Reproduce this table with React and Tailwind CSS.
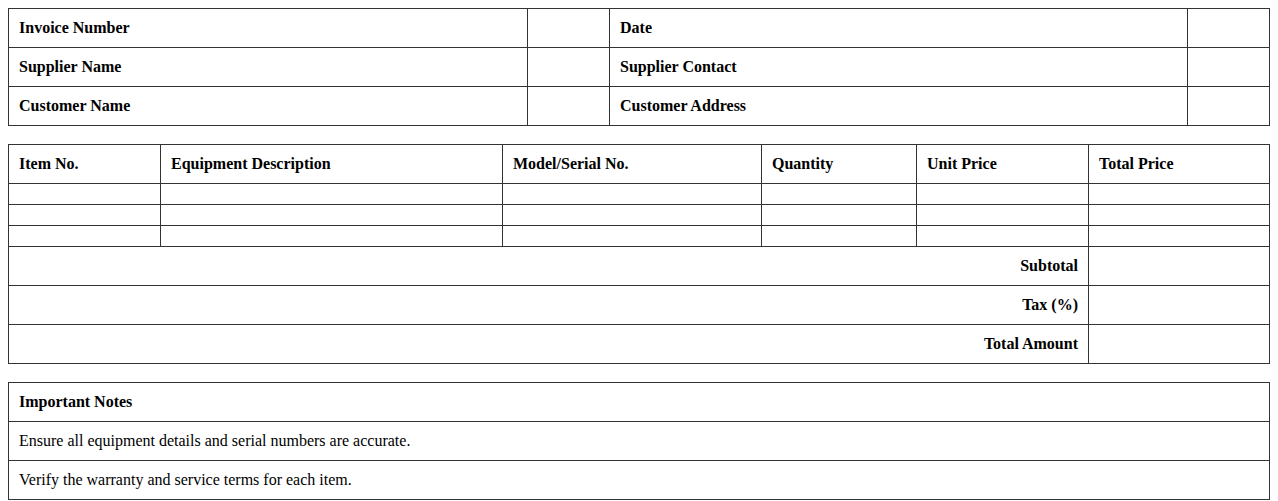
import React from 'react';

const cell = 'border border-[#333] p-[10px] align-middle';

export default function App() {
  const items = [1, 2, 3];
  return (
    <div className="min-h-screen bg-white p-2 font-['Liberation_Serif',serif] text-[16px] leading-[18px] text-black">
      <div className="flex flex-col gap-[18px]">
        <table className="w-full table-fixed border-collapse">
          <colgroup>
            <col className="w-[519px]" />
            <col className="w-[82px]" />
            <col className="w-[578px]" />
            <col />
          </colgroup>
          <tbody>
            {[
              ['Invoice Number', 'Date'],
              ['Supplier Name', 'Supplier Contact'],
              ['Customer Name', 'Customer Address'],
            ].map(([a, b]) => (
              <tr key={a}>
                <th className={`${cell} text-left font-bold`}>{a}</th>
                <td className={cell}></td>
                <th className={`${cell} text-left font-bold`}>{b}</th>
                <td className={cell}></td>
              </tr>
            ))}
          </tbody>
        </table>

        <table className="w-full table-fixed border-collapse">
          <colgroup>
            <col className="w-[152px]" />
            <col className="w-[342px]" />
            <col className="w-[259px]" />
            <col className="w-[155px]" />
            <col className="w-[172px]" />
            <col />
          </colgroup>
          <thead>
            <tr>
              {['Item No.', 'Equipment Description', 'Model/Serial No.', 'Quantity', 'Unit Price', 'Total Price'].map((h) => (
                <th key={h} className={`${cell} text-left font-bold`}>{h}</th>
              ))}
            </tr>
          </thead>
          <tbody>
            {items.map((i) => (
              <tr key={i}>
                {[0, 1, 2, 3, 4, 5].map((c) => (
                  <td key={c} className={cell}></td>
                ))}
              </tr>
            ))}
            {['Subtotal', 'Tax (%)', 'Total Amount'].map((label) => (
              <tr key={label}>
                <th colSpan={5} className={`${cell} text-right font-bold`}>{label}</th>
                <td className={cell}></td>
              </tr>
            ))}
          </tbody>
        </table>

        <table className="w-full table-fixed border-collapse">
          <tbody>
            <tr>
              <th className={`${cell} text-left font-bold`}>Important Notes</th>
            </tr>
            <tr>
              <td className={cell}>Ensure all equipment details and serial numbers are accurate.</td>
            </tr>
            <tr>
              <td className={cell}>Verify the warranty and service terms for each item.</td>
            </tr>
          </tbody>
        </table>
      </div>
    </div>
  );
}
